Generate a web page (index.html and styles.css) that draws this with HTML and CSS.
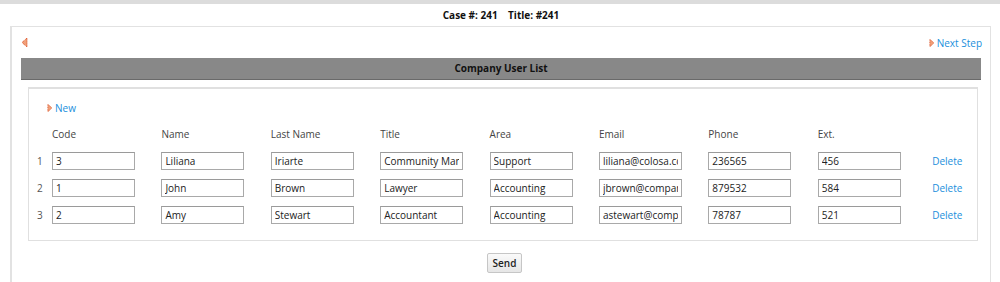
FILE: index.html
```html
<!DOCTYPE html>
<html lang="en">
<head>
  <meta charset="UTF-8">
  <title>Company User List</title>
  <link rel="stylesheet" href="styles.css">
</head>
<body>
  <div class="topbar"></div>
  <div class="case-title">Case #: 241 &nbsp;&nbsp; Title: #241</div>

  <div class="panel">
    <div class="nav">
      <a class="back" href="#">
        <svg width="6" height="9" viewBox="0 0 6 9"><polygon points="5,0 0,4.5 5,9" fill="#f0a07a" stroke="#d9471a" stroke-width="1" stroke-dasharray="1 1"/></svg>
      </a>
      <a class="link" href="#">
        <svg width="5" height="8" viewBox="0 0 6 9"><polygon points="1,0 6,4.5 1,9" fill="#f0a07a" stroke="#d9471a" stroke-width="1" stroke-dasharray="1 1"/></svg>
        Next Step
      </a>
    </div>

    <div class="list-header">Company User List</div>

    <div class="list-box">
      <div class="new-row">
        <a class="link" href="#">
          <svg width="5" height="8" viewBox="0 0 6 9"><polygon points="1,0 6,4.5 1,9" fill="#f0a07a" stroke="#d9471a" stroke-width="1" stroke-dasharray="1 1"/></svg>
          New
        </a>
      </div>

      <div class="grid" id="grid">
        <div></div>
        <div class="head">Code</div>
        <div class="head">Name</div>
        <div class="head">Last Name</div>
        <div class="head">Title</div>
        <div class="head">Area</div>
        <div class="head">Email</div>
        <div class="head">Phone</div>
        <div class="head">Ext.</div>
        <div></div>
      </div>
    </div>

    <div class="actions">
      <button class="send">Send</button>
    </div>
  </div>

  <script>
    const users = [
      ['3', 'Liliana', 'Iriarte', 'Community Manager', 'Support', 'liliana@colosa.com', '236565', '456'],
      ['1', 'John', 'Brown', 'Lawyer', 'Accounting', 'jbrown@company.com', '879532', '584'],
      ['2', 'Amy', 'Stewart', 'Accountant', 'Accounting', 'astewart@company.com', '78787', '521']
    ];
    const grid = document.getElementById('grid');

    users.forEach((u, i) => {
      const num = document.createElement('div');
      num.className = 'num';
      num.textContent = i + 1;
      grid.appendChild(num);

      u.forEach(v => {
        const cell = document.createElement('div');
        cell.className = 'cell';
        const input = document.createElement('input');
        input.type = 'text';
        input.value = v;
        cell.appendChild(input);
        grid.appendChild(cell);
      });

      const del = document.createElement('div');
      del.className = 'cell';
      del.innerHTML = '<a class="link" href="#">Delete</a>';
      grid.appendChild(del);
    });
  </script>
</body>
</html>
```

FILE: styles.css
```css
body {
  margin: 0;
  font-family: "Open Sans", "Liberation Sans", sans-serif;
  font-size: 10px;
  color: #333;
  background: #fff;
}
.topbar {
  height: 4px;
  background: #dcdcdc;
}
.case-title {
  height: 22px;
  line-height: 22px;
  text-align: center;
  font-weight: bold;
  color: #111;
  padding-left: 2px;
}
.panel {
  margin: 0 9px 0 10px;
  border: 1px solid #e2e2e2;
  border-left-width: 2px;
  border-bottom: none;
  padding: 0 8px 0 9px;
  height: 260px;
}
.nav {
  height: 31px;
  display: flex;
  justify-content: space-between;
  align-items: center;
}
.nav .back {
  display: flex;
  align-items: center;
  padding-left: 1px;
}
.link {
  color: #1a8fdc;
  text-decoration: none;
  display: inline-flex;
  align-items: center;
  gap: 3px;
}
.list-header {
  height: 21px;
  line-height: 21px;
  background: #888;
  border-bottom: 1px solid #6a6a6a;
  text-align: center;
  font-weight: bold;
  color: #111;
  margin-right: 1px;
}
.list-box {
  margin: 7px 4px 0 7px;
  border: 1px solid #e0e0e0;
  border-top-width: 2px;
  padding: 11px 0 12px;
}
.new-row {
  height: 16px;
  line-height: 16px;
  padding-left: 18px;
}
.grid {
  margin-top: 5px;
  display: grid;
  grid-template-columns: 23px repeat(8, 109.4px) 1fr;
  grid-template-rows: 26px repeat(3, 27px);
  align-items: center;
}
.head {
  color: #444;
}
.num {
  color: #555;
  padding-left: 8px;
}
.cell input {
  width: 83px;
  height: 18px;
  box-sizing: border-box;
  border: 1px solid #a9a9a9;
  border-top-color: #9a9a9a;
  padding: 0 3px;
  font-family: "Open Sans", "Liberation Sans", sans-serif;
  font-size: 10px;
  color: #222;
  display: block;
}
.cell .link {
  padding-left: 5px;
}
.actions {
  text-align: center;
  padding-top: 12px;
}
.send {
  height: 20px;
  width: 35px;
  padding: 0;
  font-family: "Open Sans", "Liberation Sans", sans-serif;
  font-size: 10px;
  font-weight: 600;
  color: #222;
  border: 1px solid #c6c6c6;
  border-radius: 2px;
  background: linear-gradient(#fafafa, #e6e6e6);
  margin-left: 6px;
}
```
